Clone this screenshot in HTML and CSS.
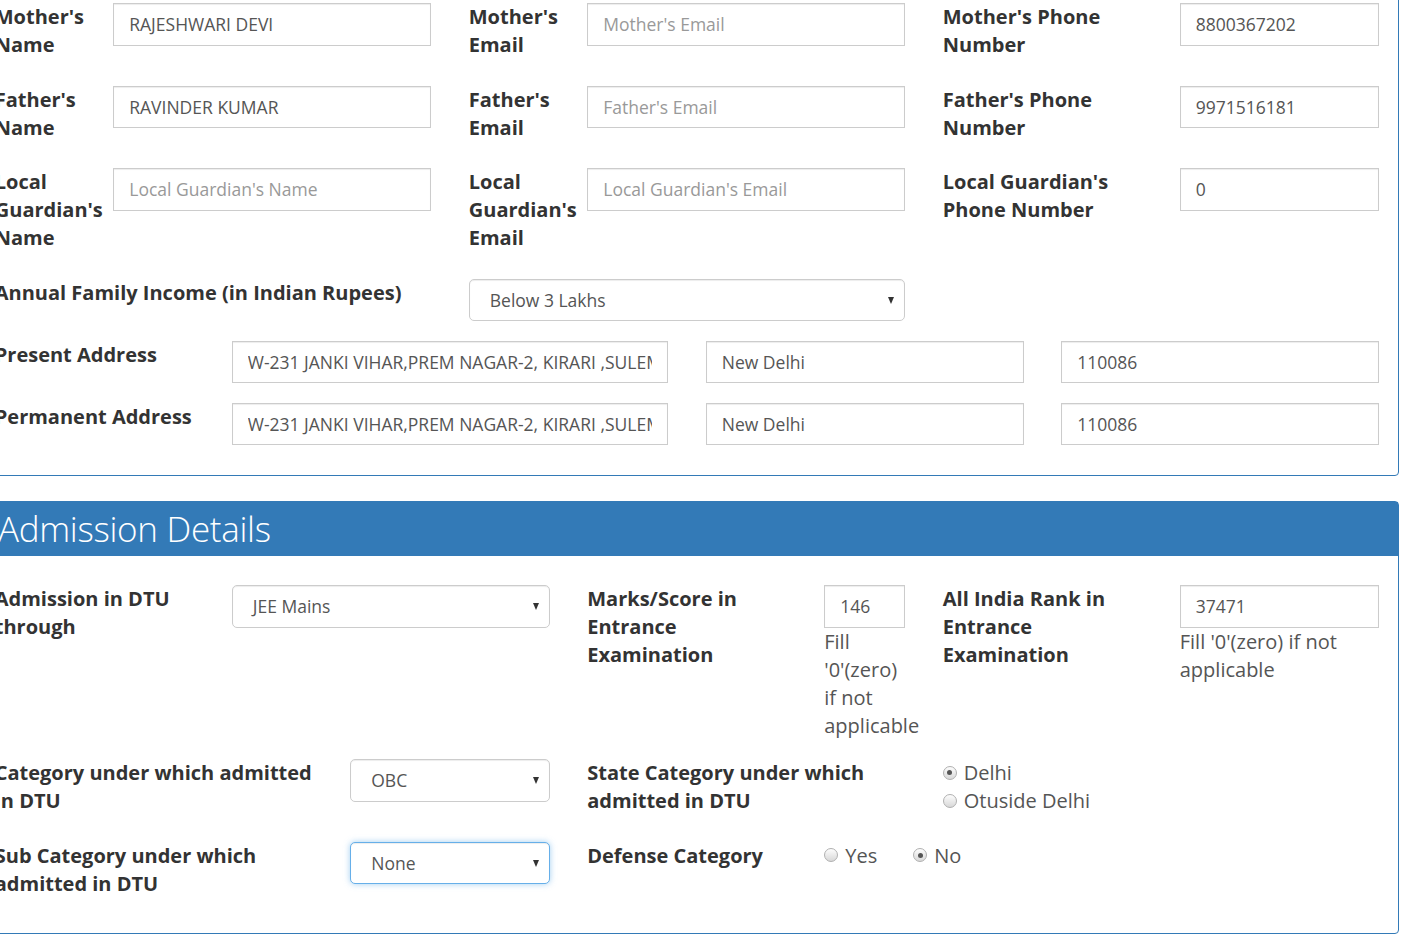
FILE: index.html
```
<!DOCTYPE html>
<html lang="en">
<head>
<meta charset="utf-8">
<title>Student Details</title>
<link rel="stylesheet" href="styles.css">
</head>
<body>
<div class="page">
  <section class="panel panel-first">
    <div class="panel-body">
      <div class="row">
        <label class="lbl s1">Mother's Name</label>
        <div class="s3"><input class="ctl" type="text" value="RAJESHWARI DEVI"></div>
        <label class="lbl s1">Mother's Email</label>
        <div class="s3"><input class="ctl" type="text" placeholder="Mother's Email"></div>
        <label class="lbl s2">Mother's Phone Number</label>
        <div class="s2"><input class="ctl" type="text" value="8800367202"></div>
      </div>
      <div class="row">
        <label class="lbl s1">Father's Name</label>
        <div class="s3"><input class="ctl" type="text" value="RAVINDER KUMAR"></div>
        <label class="lbl s1">Father's Email</label>
        <div class="s3"><input class="ctl" type="text" placeholder="Father's Email"></div>
        <label class="lbl s2">Father's Phone Number</label>
        <div class="s2"><input class="ctl" type="text" value="9971516181"></div>
      </div>
      <div class="row">
        <label class="lbl s1">Local Guardian's Name</label>
        <div class="s3"><input class="ctl" type="text" placeholder="Local Guardian's Name"></div>
        <label class="lbl s1">Local Guardian's Email</label>
        <div class="s3"><input class="ctl" type="text" placeholder="Local Guardian's Email"></div>
        <label class="lbl s2">Local Guardian's Phone Number</label>
        <div class="s2"><input class="ctl" type="text" value="0"></div>
      </div>
      <div class="row">
        <label class="lbl s4">Annual Family Income (in Indian Rupees)</label>
        <div class="s4">
          <div class="sel"><span class="sel-val">Below 3 Lakhs</span><span class="caret"></span></div>
        </div>
      </div>
      <div class="row">
        <label class="lbl s2">Present Address</label>
        <div class="s4"><input class="ctl" type="text" value="W-231 JANKI VIHAR,PREM NAGAR-2, KIRARI ,SULEMAN NAGAR"></div>
        <div class="s3"><input class="ctl" type="text" value="New Delhi"></div>
        <div class="s3"><input class="ctl" type="text" value="110086"></div>
      </div>
      <div class="row">
        <label class="lbl s2">Permanent Address</label>
        <div class="s4"><input class="ctl" type="text" value="W-231 JANKI VIHAR,PREM NAGAR-2, KIRARI ,SULEMAN NAGAR"></div>
        <div class="s3"><input class="ctl" type="text" value="New Delhi"></div>
        <div class="s3"><input class="ctl" type="text" value="110086"></div>
      </div>
    </div>
  </section>

  <section class="panel">
    <div class="panel-heading"><h3 class="panel-title">Admission Details</h3></div>
    <div class="panel-body body-second">
      <div class="row">
        <label class="lbl s2">Admission in DTU through</label>
        <div class="s3">
          <div class="sel"><span class="sel-val">JEE Mains</span><span class="caret"></span></div>
        </div>
        <label class="lbl s2">Marks/Score in Entrance Examination</label>
        <div class="s1">
          <input class="ctl" type="text" value="146">
          <p class="help">Fill '0'(zero) if not applicable</p>
        </div>
        <label class="lbl s2">All India Rank in Entrance Examination</label>
        <div class="s2">
          <input class="ctl" type="text" value="37471">
          <p class="help">Fill '0'(zero) if not applicable</p>
        </div>
      </div>
      <div class="row">
        <label class="lbl s3">Category under which admitted in DTU</label>
        <div class="s2">
          <div class="sel"><span class="sel-val">OBC</span><span class="caret"></span></div>
        </div>
        <label class="lbl s3">State Category under which admitted in DTU</label>
        <div class="s4 radios-stacked">
          <label class="radio"><span class="rb checked"></span>Delhi</label>
          <label class="radio"><span class="rb"></span>Otuside Delhi</label>
        </div>
      </div>
      <div class="row">
        <label class="lbl s3">Sub Category under which admitted in DTU</label>
        <div class="s2">
          <div class="sel focus"><span class="sel-val">None</span><span class="caret"></span></div>
        </div>
        <label class="lbl s2">Defense Category</label>
        <div class="s5 radios-inline">
          <label class="radio"><span class="rb"></span>Yes</label>
          <label class="radio"><span class="rb checked"></span>No</label>
        </div>
      </div>
    </div>
  </section>
</div>
</body>
</html>
```
FILE: styles.css
```
* { box-sizing: border-box; }

html, body {
  margin: 0;
  padding: 0;
  background: #fff;
  overflow: hidden;
}

body {
  font-family: "Open Sans", "Noto Sans", "Liberation Sans", sans-serif;
  color: #333;
  font-size: 20px;
  line-height: 28px;
}

.page {
  width: 1424px;
  margin-left: -25px;
  margin-top: -10px;
}

.panel {
  border: 1px solid #337ab7;
  border-radius: 4px;
  margin-bottom: 25px;
  background: #fff;
}

.panel-first .panel-body {
  padding-top: 12px;
}

.panel-body {
  padding: 29px 0 10px 0;
}

.body-second {
  padding-top: 29.5px;
  padding-bottom: 8.5px;
}

.panel-heading {
  background: #337ab7;
  color: #fff;
  height: 54px;
  padding: 0 22px;
  display: flex;
  align-items: center;
}

.panel-title {
  margin: 0;
  font-size: 35px;
  font-weight: 300;
  line-height: 40px;
  letter-spacing: -0.3px;
}

.row {
  display: grid;
  grid-template-columns: repeat(12, 1fr);
  margin-bottom: 19.5px;
  align-items: start;
}

.row > * {
  padding: 0 18.75px;
  min-width: 0;
}

.s1 { grid-column: span 1; }
.s2 { grid-column: span 2; }
.s3 { grid-column: span 3; }
.s4 { grid-column: span 4; }
.s5 { grid-column: span 5; }

.lbl {
  display: block;
  font-size: 20px;
  font-weight: 700;
  color: #333;
  margin-bottom: 7px;
}

.ctl {
  display: block;
  width: 100%;
  height: 42.5px;
  padding: 0 15px;
  font-family: inherit;
  font-size: 17.5px;
  color: #555;
  background: #fff;
  border: 1px solid #ccc;
  border-radius: 0;
  box-shadow: inset 0 1px 1px rgba(0, 0, 0, 0.075);
  outline: none;
}

.ctl::placeholder {
  color: #999;
  opacity: 1;
}

.sel {
  position: relative;
  height: 42.5px;
  border: 1px solid #ccc;
  border-radius: 5px;
  background: #fff;
  padding: 0 40px 0 20px;
  display: flex;
  align-items: center;
  font-size: 17.5px;
  color: #555;
  box-shadow: inset 0 1px 1px rgba(0, 0, 0, 0.075);
}

.sel.focus {
  border-color: #66afe9;
  box-shadow: inset 0 1px 1px rgba(0, 0, 0, 0.075), 0 0 6px rgba(102, 175, 233, 0.6);
}

.caret {
  position: absolute;
  right: 10px;
  top: 50%;
  margin-top: -3px;
  width: 0;
  height: 0;
  border-left: 3.5px solid transparent;
  border-right: 3.5px solid transparent;
  border-top: 7px solid #333;
}

.help {
  margin: 0;
  font-size: 20px;
  line-height: 28px;
  color: #555;
}

.radios-stacked {
  display: flex;
  flex-direction: column;
}

.radios-inline {
  display: flex;
  gap: 36px;
}

.radio {
  display: flex;
  align-items: center;
  gap: 7px;
  font-size: 20px;
  line-height: 28px;
  color: #555;
}

.rb {
  display: inline-block;
  width: 14px;
  height: 14px;
  border-radius: 50%;
  border: 1px solid #b0b0b0;
  background: linear-gradient(#fdfdfd, #d8d8d8);
  position: relative;
  flex: none;
  margin-top: -1px;
}

.rb.checked::after {
  content: "";
  position: absolute;
  left: 3.5px;
  top: 3.5px;
  width: 5px;
  height: 5px;
  border-radius: 50%;
  background: #555;
}
```
